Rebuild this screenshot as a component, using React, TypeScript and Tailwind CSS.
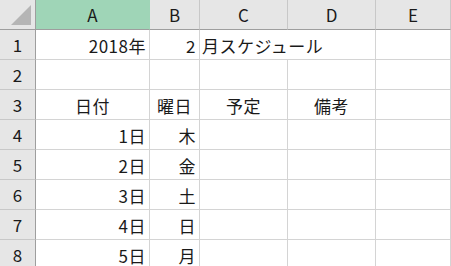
import React from 'react';

const cols = ['A', 'B', 'C', 'D', 'E'];

type Cell = { text?: string; align?: 'left' | 'center' | 'right'; noRight?: boolean };

const rows: Cell[][] = [
  [{ text: '2018年', align: 'right' }, { text: '2', align: 'right' }, { text: '月スケジュール', align: 'left', noRight: true }, {}, {}],
  [{}, {}, {}, {}, {}],
  [{ text: '日付', align: 'center' }, { text: '曜日', align: 'center' }, { text: '予定', align: 'center' }, { text: '備考', align: 'center' }, {}],
  [{ text: '1日', align: 'right' }, { text: '木', align: 'right' }, {}, {}, {}],
  [{ text: '2日', align: 'right' }, { text: '金', align: 'right' }, {}, {}, {}],
  [{ text: '3日', align: 'right' }, { text: '土', align: 'right' }, {}, {}, {}],
  [{ text: '4日', align: 'right' }, { text: '日', align: 'right' }, {}, {}, {}],
  [{ text: '5日', align: 'right' }, { text: '月', align: 'right' }, {}, {}, {}],
];

const alignClass = {
  left: 'justify-start pl-[2px]',
  center: 'justify-center',
  right: 'justify-end pr-[3px]',
};

export default function App() {
  return (
    <div
      className="w-[451px] h-[266px] overflow-hidden bg-white text-[#1a1a1a]"
      style={{ fontFamily: '"Noto Sans CJK JP", "Noto Sans", sans-serif' }}
    >
      <div className="grid grid-cols-[36px_114px_50px_88px_88px_75px] auto-rows-[30px]">
        {/* header row */}
        <div className="relative bg-[#e6e6e6] border-r border-b border-[#9e9e9e]">
          <div className="absolute right-[4px] bottom-[4px] w-0 h-0 border-l-[20px] border-l-transparent border-b-[20px] border-b-[#b5b5b5]" />
        </div>
        {cols.map((c, i) => (
          <div
            key={c}
            className={
              'flex items-center justify-center border-b border-r text-[17px] pt-[1px] ' +
              (i === 0
                ? 'bg-[#9fd5b7] border-b-[#9e9e9e] border-r-[#9fd5b7]'
                : 'bg-[#e6e6e6] border-b-[#9e9e9e] border-r-[#c8c8c8]')
            }
          >
            {c}
          </div>
        ))}

        {rows.map((row, r) => (
          <React.Fragment key={r}>
            <div className="flex items-center justify-center bg-[#e6e6e6] border-r border-r-[#9e9e9e] border-b border-b-[#c8c8c8] text-[17px] pt-[1px]">
              {r + 1}
            </div>
            {row.map((cell, c) => (
              <div
                key={c}
                className={
                  'relative flex items-center whitespace-nowrap border-b border-b-[#d4d4d4] text-[17px] tracking-[0.5px] pt-[2px] ' +
                  (cell.noRight ? 'z-10 ' : 'border-r border-r-[#d4d4d4] ') +
                  (cell.align ? alignClass[cell.align] : '')
                }
              >
                {cell.text}
              </div>
            ))}
          </React.Fragment>
        ))}
      </div>
    </div>
  );
}
